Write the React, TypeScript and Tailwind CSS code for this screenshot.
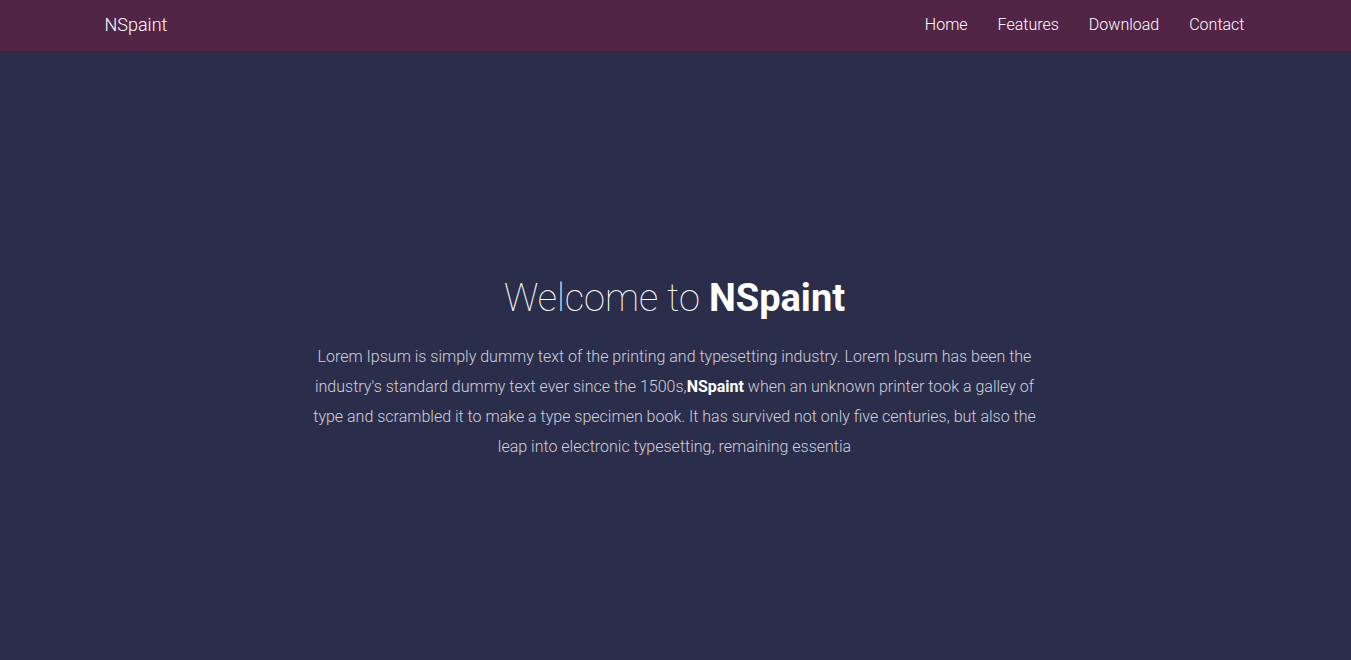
import React from "react";

export default function App() {
  return (
    <div className="min-h-[660px] bg-[#2b2e4a] font-['Roboto',sans-serif]">
      <nav className="h-[51px] bg-[#522546]">
        <div className="w-[1349px]">
          <div className="mx-auto flex h-[51px] w-[1170px] items-center justify-between px-[15px] pb-[2px]">
            <a className="text-[18px] font-light text-white">NSpaint</a>
            <ul className="flex text-[16px] font-light text-white">
              <li className="px-[15px]">Home</li>
              <li className="px-[15px]">Features</li>
              <li className="px-[15px]">Download</li>
              <li className="pl-[15px]">Contact</li>
            </ul>
          </div>
        </div>
      </nav>
      <main className="flex w-[1349px] flex-col items-center pt-[226px]">
        <h1 className="text-[38px] leading-[42px] font-thin text-white">
          Welcome to <span className="font-bold">NSpaint</span>
        </h1>
        <p className="mt-[23px] w-[730px] text-center text-[16px] font-light leading-[30px] text-[#d0d0da]">
          Lorem Ipsum is simply dummy text of the printing and typesetting industry. Lorem Ipsum has been the industry's standard dummy text ever since the 1500s,<b className="font-bold text-white">NSpaint</b> when an unknown printer took a galley of type and scrambled it to make a type specimen book. It has survived not only five centuries, but also the leap into electronic typesetting, remaining essentia
        </p>
      </main>
    </div>
  );
}
